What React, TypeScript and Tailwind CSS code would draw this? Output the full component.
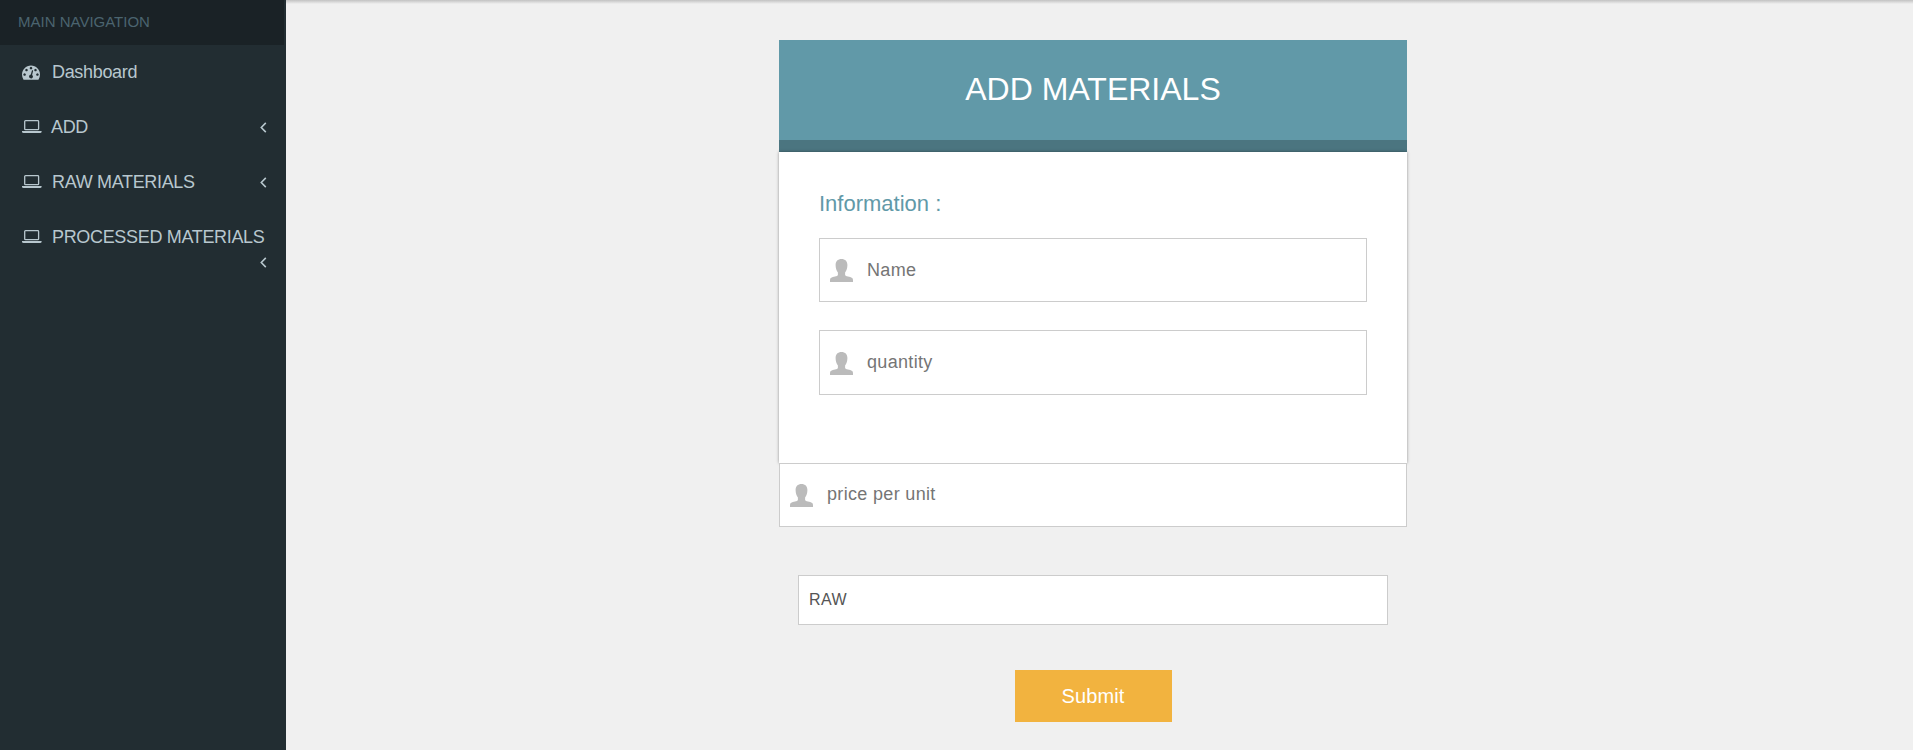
import React from "react";

const DashboardIcon = () => (
  <svg className="h-[18px] w-[18px] shrink-0" viewBox="0 0 1792 1792" fill="currentColor">
    <path d="M384 1152q0-53-37.5-90.5t-90.5-37.5-90.5 37.5-37.5 90.5 37.5 90.5 90.5 37.5 90.5-37.5 37.5-90.5zm192-448q0-53-37.5-90.5t-90.5-37.5-90.5 37.5-37.5 90.5 37.5 90.5 90.5 37.5 90.5-37.5 37.5-90.5zm428 481l101-382q6-26-7.5-48.5t-38.5-29.5-48 6.5-30 39.5l-101 382q-60 5-107 43.5t-63 98.5q-20 77 20 146t117 89 146-20 89-117q16-60-6-117t-72-91zm660-33q0-53-37.5-90.5t-90.5-37.5-90.5 37.5-37.5 90.5 37.5 90.5 90.5 37.5 90.5-37.5 37.5-90.5zm-640-640q0-53-37.5-90.5t-90.5-37.5-90.5 37.5-37.5 90.5 37.5 90.5 90.5 37.5 90.5-37.5 37.5-90.5zm448 192q0-53-37.5-90.5t-90.5-37.5-90.5 37.5-37.5 90.5 37.5 90.5 90.5 37.5 90.5-37.5 37.5-90.5zm320 448q0 261-141 483-19 29-54 29h-1402q-35 0-54-29-141-221-141-483 0-182 71-348t191-286 286-191 348-71 348 71 286 191 191 286 71 348z" />
  </svg>
);

const LaptopIcon = () => (
  <svg className="h-[13px] w-5 shrink-0" viewBox="0 0 20 13" fill="none">
    <rect x="2.7" y="0.7" width="13.9" height="9" rx="0.8" stroke="currentColor" strokeWidth="1.3" />
    <path d="M0 11h19.6v.8q0 1.200-1.600 1.200H1.600Q0 13 0 11.800z" fill="currentColor" />
  </svg>
);

const ChevronIcon = () => (
  <svg className="mt-px h-[11px] w-[7px] shrink-0" viewBox="0 0 7 11" fill="none">
    <path d="M5.800 .9 1.300 5.500l4.500 4.600" stroke="currentColor" strokeWidth="1.6" />
  </svg>
);

const PersonIcon = () => (
  <svg className="h-[23px] w-[23px] shrink-0" viewBox="0 0 23 23" fill="#bbb">
    <path d="M11.500 0C15.200 0 17.400 2.300 17.400 6c0 3.400-.9 5.700-2.300 7.500V16c.3.8 1.300 1.200 2.900 1.600 3.300.7 5 1.400 5 3.300V23H0v-2.100c0-1.900 1.700-2.600 5-3.300 1.600-.4 2.600-.8 2.900-1.600v-2.500C6.500 11.700 5.600 9.400 5.600 6c0-3.700 2.200-6 5.900-6z" />
  </svg>
);

const Field = ({
  label,
  className,
  inputClassName,
}: {
  label: string;
  className: string;
  inputClassName: string;
}) => (
  <label className={`flex items-start gap-[14px] border border-[#ccc] bg-white pl-[10px] ${className}`}>
    <PersonIcon />
    <input
      className={`h-6 min-w-0 flex-1 bg-transparent text-[18px] leading-6 tracking-[0.33px] outline-none placeholder:text-[#757575] ${inputClassName}`}
      placeholder={label}
    />
  </label>
);

export default function App() {
  return (
    <div className="flex h-[750px] w-full overflow-hidden bg-[#f0f0f0] font-['Liberation_Sans',Arial,sans-serif]">
      <aside className="w-[286px] shrink-0 bg-[#222d32] text-[#b8c7ce]">
        <div className="flex h-[45px] w-[284px] items-center bg-[#1a2226] pl-[18px] text-[15px] text-[#4b646f]">
          MAIN NAVIGATION
        </div>
        <nav className="-mt-px text-[18px] leading-[26px] tracking-[-0.33px]">
          <a className="flex h-[55px] items-center pl-[22px]">
            <DashboardIcon />
            <span className="pl-[12px]">Dashboard</span>
          </a>
          <a className="flex h-[55px] items-center pr-[19px] pl-[22px]">
            <LaptopIcon />
            <span className="flex-1 pl-[9px]">ADD</span>
            <ChevronIcon />
          </a>
          <a className="flex h-[55px] items-center pr-[19px] pl-[22px]">
            <LaptopIcon />
            <span className="flex-1 pl-[10px]">RAW MATERIALS</span>
            <ChevronIcon />
          </a>
          <a className="flex flex-col pr-[19px] pl-[22px]">
            <span className="flex h-[55px] items-center whitespace-nowrap">
              <LaptopIcon />
              <span className="pl-[10px]">PROCESSED MATERIALS</span>
            </span>
            <span className="mt-[-8px] flex justify-end">
              <ChevronIcon />
            </span>
          </a>
        </nav>
      </aside>
      <main className="flex flex-1 flex-col items-center">
        <div className="h-1 w-full bg-linear-to-b from-[#c2c2c2] to-[#f0f0f0]" />
        <form className="mt-9 mr-[13px] flex w-[628px] flex-col" onSubmit={(e) => e.preventDefault()}>
          <h1 className="flex h-28 items-center justify-center border-b-12 border-[#4b7580] bg-[#6199a8] pb-[2px] text-[32px] text-white">
            ADD MATERIALS
          </h1>
          <section className="flex h-[311px] flex-col bg-white px-10 pt-[38px] shadow-[0_0_3px_rgba(0,0,0,0.4)]">
            <h2 className="mb-[20px] text-[22px] leading-7 text-[#6199a8]">Information :</h2>
            <div className="flex flex-col gap-7">
              <Field label="Name" className="h-16 pt-5" inputClassName="-mt-px" />
              <Field label="quantity" className="h-[65px] pt-[21px]" inputClassName="-mt-0.5" />
            </div>
          </section>
          <div className="relative">
            <Field label="price per unit" className="h-16 pt-5" inputClassName="-mt-0.5" />
          </div>
          <div className="mx-[19px] mt-12 flex h-[50px] items-center border border-[#ccc] bg-white pl-[10px] text-[16px] tracking-[0.4px] text-[#555]">
            RAW
          </div>
          <button className="mt-[45px] h-[52px] w-[157px] self-center bg-[#f2b33f] text-[20px] tracking-[0.1px] text-white">
            Submit
          </button>
        </form>
      </main>
    </div>
  );
}
